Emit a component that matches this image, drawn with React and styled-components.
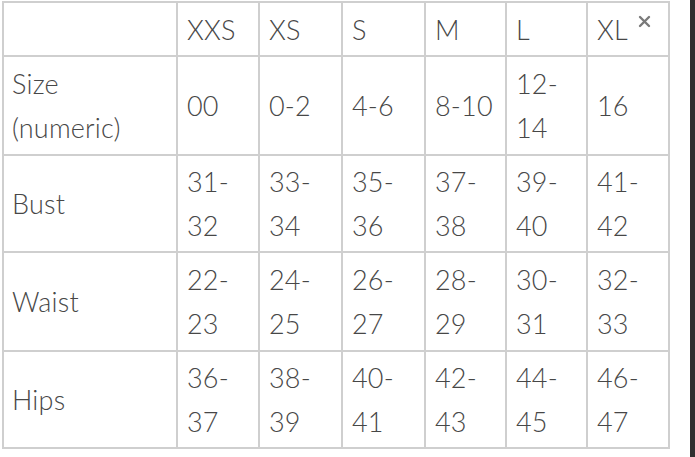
import React from 'react';
import styled, { createGlobalStyle } from 'styled-components';

const GlobalStyle = createGlobalStyle`
  html, body {
    margin: 0;
    padding: 0;
    background: #fff;
  }
  body {
    font-family: Lato, "Open Sans", sans-serif;
  }
`

const Page = styled.div`
  display: flex;
  justify-content: space-between;
  height: 457px;
  width: 695px;
  overflow: hidden;
`

const TableWrap = styled.div`
  position: relative;
  margin: 1px 0 0 2px;
  align-self: flex-start;
`

const Grid = styled.div`
  display: grid;
  grid-template-columns: 172px 80px 81px 81px 79px 79px 80px;
  grid-template-rows: 52px 97px 95px 97px 95px;
  gap: 2px;
  padding: 2px;
  background: #cfcfcf;
`

const Cell = styled.div`
  background: #fff;
  display: flex;
  align-items: center;
  padding: ${p => (p.$label ? '0 0 0 8px' : '0 0 0 9px')};
  color: #474747;
  font-size: 27px;
  font-weight: 300;
  line-height: 44px;
  letter-spacing: 0.2px;
  padding-top: ${p => (p.$head ? '2px' : '1px')};
`

const CloseButton = styled.span`
  position: absolute;
  top: 11px;
  left: 636px;
  width: 13px;
  height: 13px;
  display: block;
`

const SideBar = styled.div`
  width: 5px;
  background: #303030;
`

const sizes = ['XXS', 'XS', 'S', 'M', 'L', 'XL']

const rows = [
  { label: ['Size', '(numeric)'], values: [['00'], ['0-2'], ['4-6'], ['8-10'], ['12-', '14'], ['16']] },
  { label: ['Bust'], values: [['31-', '32'], ['33-', '34'], ['35-', '36'], ['37-', '38'], ['39-', '40'], ['41-', '42']] },
  { label: ['Waist'], values: [['22-', '23'], ['24-', '25'], ['26-', '27'], ['28-', '29'], ['30-', '31'], ['32-', '33']] },
  { label: ['Hips'], values: [['36-', '37'], ['38-', '39'], ['40-', '41'], ['42-', '43'], ['44-', '45'], ['46-', '47']] },
]

const Lines = ({ parts }) => (
  <div>
    {parts.map((p, i) => (
      <div key={i}>{p}</div>
    ))}
  </div>
)

export default function App() {
  return (
    <>
      <GlobalStyle />
      <Page>
        <TableWrap>
          <Grid>
            <Cell $label $head />
            {sizes.map(s => (
              <Cell key={s} $head>{s}</Cell>
            ))}
            {rows.map(row => (
              <React.Fragment key={row.label[0]}>
                <Cell $label><Lines parts={row.label} /></Cell>
                {row.values.map((v, i) => (
                  <Cell key={i}><Lines parts={v} /></Cell>
                ))}
              </React.Fragment>
            ))}
          </Grid>
          <CloseButton>
            <svg width="13" height="13" viewBox="0 0 13 13">
              <path d="M2 2 L11 11 M11 2 L2 11" stroke="#7a7a7a" strokeWidth="2.4" strokeLinecap="round" />
            </svg>
          </CloseButton>
        </TableWrap>
        <SideBar />
      </Page>
    </>
  )
}
